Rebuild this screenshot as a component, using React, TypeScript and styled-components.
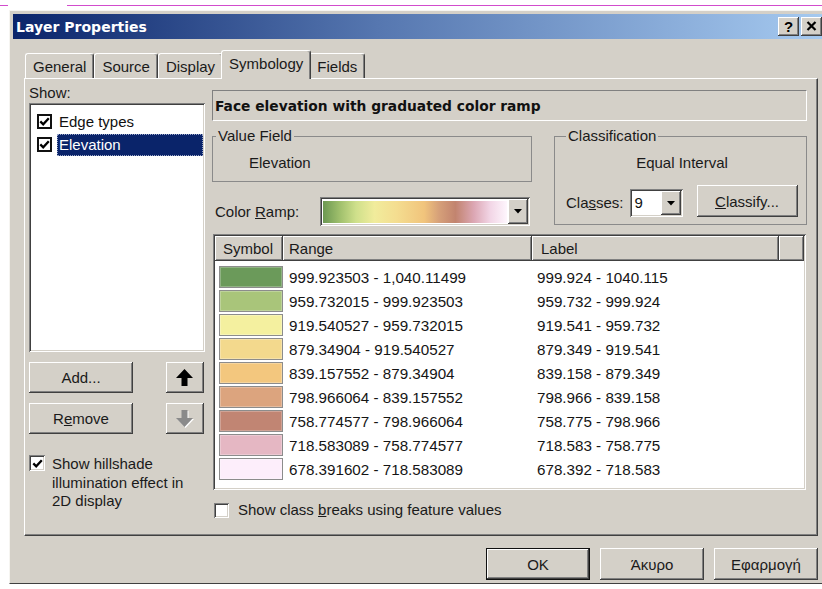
import React from "react";
import styled, { createGlobalStyle, css } from "styled-components";

const FACE = "#d4d0c8";
const SHADOW = "#808080";
const DARK = "#404040";

const GlobalStyle = createGlobalStyle`
  html, body { margin: 0; padding: 0; background: #ffffff; }
  body {
    font-family: "Liberation Sans", Arial, sans-serif;
    font-size: 15px;
    color: #111111;
  }
  * { box-sizing: border-box; }
`;

const raised = css`
  background: ${FACE};
  box-shadow: inset -1px -1px ${DARK}, inset 1px 1px #ffffff,
    inset -2px -2px ${SHADOW}, inset 2px 2px ${FACE};
`;

const sunken = css`
  box-shadow: inset 1px 1px ${SHADOW}, inset -1px -1px #ffffff,
    inset 2px 2px ${DARK}, inset -2px -2px ${FACE};
`;

/* ---------- page & window frame ---------- */

const Page = styled.div`
  width: 822px;
  height: 589px;
  overflow: hidden;
  padding-top: 5px;
  background: #ffffff;
`;

const TopRule = styled.div`
  height: 1px;
  background: linear-gradient(
    to right,
    #d24ccd 0 8px,
    #ffffff 8px 67px,
    #d24ccd 67px
  );
`;

const Window = styled.div`
  margin: 4px 0 0 9px;
  width: 821px;
  height: 574px;
  display: flex;
  flex-direction: column;
  background: ${FACE};
  border: 1px solid;
  border-color: #f6f5f1 ${DARK} ${DARK} #f6f5f1;
  padding: 3px;
`;

const TitleBar = styled.div`
  flex: none;
  height: 25px;
  display: flex;
  align-items: center;
  gap: 2px;
  padding: 0 4px 0 3px;
  background: linear-gradient(to right, #0a246a 0%, #5677b0 45%, #a6caf0 100%);
`;

const Title = styled.div`
  flex: 1;
  color: #ffffff;
  font-family: "DejaVu Sans", "Liberation Sans", sans-serif;
  font-weight: bold;
  font-size: 14px;
`;

const CaptionButton = styled.div`
  ${raised};
  width: 21px;
  height: 19px;
  display: flex;
  align-items: center;
  justify-content: center;
  font-weight: bold;
  font-size: 15px;
  color: #000;
  padding-bottom: 1px;
`;

const Body = styled.div`
  flex: 1;
  display: flex;
  flex-direction: column;
  padding: 11px 8px 0 11px;
`;

/* ---------- tabs ---------- */

const TabStrip = styled.div`
  display: flex;
  align-items: flex-end;
  height: 28px;
  padding-left: 1px;
  position: relative;
  z-index: 1;
`;

const Tab = styled.div<{ $active?: boolean }>`
  height: 25px;
  padding: 0 7px;
  display: flex;
  align-items: center;
  background: ${FACE};
  border-top: 1px solid #ffffff;
  border-left: 1px solid #ffffff;
  border-right: 1px solid ${DARK};
  border-radius: 3px 3px 0 0;
  box-shadow: inset -1px 0 ${SHADOW};
  color: #1a1a1a;
  ${(p) =>
    p.$active &&
    css`
      height: 29px;
      margin: 0 -2px -1px;
      padding: 0 7px 3px;
      position: relative;
      z-index: 2;
    `}
`;

const Panel = styled.div`
  height: 458px;
  display: flex;
  gap: 7px;
  padding: 5px 10px 0 4px;
  border: 1px solid;
  border-color: #ffffff ${DARK} ${DARK} #ffffff;
  box-shadow: inset -1px -1px ${SHADOW};
`;

/* ---------- left column: layer list ---------- */

const LeftColumn = styled.div`
  width: 176px;
  flex: none;
  display: flex;
  flex-direction: column;
`;

const FieldLabel = styled.div`
  height: 19px;
  line-height: 17px;
  color: #1a1a1a;
`;

const ListBox = styled.div`
  ${sunken};
  background: #ffffff;
  height: 249px;
  padding: 7px 2px 0 8px;
`;

const ListItem = styled.div`
  height: 23px;
  display: flex;
  align-items: center;
  gap: 5px;
`;

const ItemText = styled.div<{ $selected?: boolean }>`
  flex: 1;
  height: 22px;
  line-height: 22px;
  padding-left: 2px;
  ${(p) =>
    p.$selected &&
    css`
      background: #0a246a;
      color: #ffffff;
      outline: 1px dotted #9aa6c8;
      outline-offset: -1px;
    `}
`;

const FlatCheck = styled.div`
  width: 15px;
  height: 15px;
  flex: none;
  border: 2px solid #111;
  background: #ffffff;
  display: flex;
  align-items: center;
  justify-content: center;
`;

const Check3D = styled.div<{ $size: number }>`
  ${sunken};
  width: ${(p) => p.$size}px;
  height: ${(p) => p.$size}px;
  flex: none;
  background: #ffffff;
  display: flex;
  align-items: center;
  justify-content: center;
`;

const ButtonRow = styled.div`
  margin-top: 10px;
  display: flex;
  justify-content: space-between;
  padding-right: 1px;
`;

const PushButton = styled.div<{ $w: number; $h: number; $default?: boolean }>`
  ${raised};
  width: ${(p) => p.$w}px;
  height: ${(p) => p.$h}px;
  display: flex;
  align-items: center;
  justify-content: center;
  color: #1a1a1a;
  ${(p) =>
    p.$default &&
    css`
      border: 1px solid #111;
    `}
`;

const CheckOption = styled.div<{ $gap: number }>`
  display: flex;
  align-items: flex-start;
  gap: ${(p) => p.$gap}px;
  line-height: 18.5px;
  color: #1a1a1a;
`;

const Hillshade = styled(CheckOption)`
  margin-top: 21px;
`;

/* ---------- right column: symbology ---------- */

const RightColumn = styled.div`
  flex: 1;
  display: flex;
  flex-direction: column;
  padding-top: 6px;
`;

const Heading = styled.div`
  height: 31px;
  display: flex;
  align-items: center;
  padding-left: 2px;
  font-family: "DejaVu Sans", "Liberation Sans", sans-serif;
  font-weight: bold;
  font-size: 13.8px;
  border: 1px solid;
  border-color: ${SHADOW} #ffffff #ffffff ${SHADOW};
  color: #111;
`;

const Settings = styled.div`
  margin-top: 7px;
  display: grid;
  grid-template-columns: 320px 253px;
  column-gap: 22px;
  align-items: start;
`;

const SettingsLeft = styled.div`
  display: flex;
  flex-direction: column;
`;

const Group = styled.fieldset<{ $pad: string }>`
  margin: 0;
  padding: ${(p) => p.$pad};
  border: 1px solid #8a8a8a;
  min-width: 0;
`;

const Legend = styled.legend`
  padding: 0 2px;
  line-height: 16px;
  color: #1a1a1a;
`;

const GroupValue = styled.div<{ $indent?: number; $center?: boolean }>`
  line-height: 17px;
  margin-left: ${(p) => p.$indent ?? 0}px;
  text-align: ${(p) => (p.$center ? "center" : "left")};
  color: #1a1a1a;
`;

const RampRow = styled.div`
  margin-top: 15px;
  display: grid;
  grid-template-columns: 108px 210px;
  align-items: center;
`;

const RampLabel = styled.div`
  padding-left: 3px;
  color: #1a1a1a;
`;

const Combo = styled.div<{ $w: number; $h: number }>`
  ${sunken};
  background: #ffffff;
  width: ${(p) => p.$w}px;
  height: ${(p) => p.$h}px;
  display: flex;
  align-items: stretch;
  padding: 2px 2px 2px 3px;
`;

const RampSwatch = styled.div`
  flex: 1;
  margin: 2px 1px 1px 0;
  background: linear-gradient(
    to right,
    #6c9852 0%,
    #9fbf6c 9%,
    #cfe08b 18%,
    #f1ec9c 28%,
    #f4dd90 40%,
    #f1c47c 55%,
    #d6a079 63%,
    #c2846f 72%,
    #dca7b4 82%,
    #f2d6e6 91%,
    #fef6fd 100%
  );
`;

const ComboValue = styled.div`
  flex: 1;
  line-height: 24px;
  padding-left: 2px;
`;

const DropButton = styled.div`
  ${raised};
  width: 20px;
  flex: none;
  display: flex;
  align-items: center;
  justify-content: center;
`;

const ClassesRow = styled.div`
  margin-top: 14px;
  display: flex;
  align-items: flex-end;
`;

const ClassesLabel = styled.div`
  margin-right: 6px;
  line-height: 28px;
  color: #1a1a1a;
`;

const ClassifyButton = styled(PushButton)`
  margin-left: 14px;
`;

/* ---------- class table ---------- */

const Table = styled.div`
  ${sunken};
  margin: 8px 1px 0;
  height: 256px;
  background: #ffffff;
  padding: 2px;
  display: flex;
  flex-direction: column;
`;

const columns = "68px 249px 247px 1fr";

const HeaderRow = styled.div`
  display: grid;
  grid-template-columns: ${columns};
  height: 25px;
`;

const HeaderCell = styled.div<{ $pad: number }>`
  ${raised};
  display: flex;
  align-items: center;
  padding-left: ${(p) => p.$pad}px;
  color: #1a1a1a;
`;

const Rows = styled.div`
  padding-top: 4px;
`;

const ClassRow = styled.div`
  display: grid;
  grid-template-columns: ${columns};
  height: 24px;
  align-items: center;
  font-size: 15.2px;
  color: #151515;
`;

const Swatch = styled.div<{ $color: string }>`
  margin-left: 4px;
  width: 64px;
  height: 22px;
  background: ${(p) => p.$color};
  border: 1px solid #8c8c8c;
  box-shadow: inset 0 0 0 1px rgba(255, 255, 255, 0.25);
`;

const CellText = styled.div<{ $pad: number }>`
  padding-left: ${(p) => p.$pad}px;
  white-space: nowrap;
`;

const BreaksOption = styled(CheckOption)`
  margin: 11px 0 0 2px;
  align-items: center;
`;

/* ---------- dialog buttons ---------- */

const DialogButtons = styled.div`
  margin-top: 12px;
  display: flex;
  justify-content: flex-end;
  gap: 10px;
`;

/* ---------- drawings ---------- */

const CheckMark = () => (
  <svg width="11" height="11" viewBox="0 0 11 11">
    <path
      d="M1.3 5.4 L4.2 8.3 L9.8 2.2"
      fill="none"
      stroke="#000"
      strokeWidth="2.3"
    />
  </svg>
);

const DropArrow = () => (
  <svg width="8" height="5" viewBox="0 0 8 5">
    <path d="M0 0 H8 L4 4.5 Z" fill="#000" />
  </svg>
);

const CloseGlyph = () => (
  <svg width="11" height="10" viewBox="0 0 11 10">
    <path d="M1.5 1 L9.5 9 M9.5 1 L1.5 9" stroke="#000" strokeWidth="2.2" />
  </svg>
);

const UP_ARROW = "8.5,0 17,9 11.5,9 11.5,17 5.5,17 5.5,9 0,9";
const DOWN_ARROW = "8.5,17 17,8 11.5,8 11.5,0 5.5,0 5.5,8 0,8";

const MoveArrow = ({ down }: { down?: boolean }) => (
  <svg width="18" height="18" viewBox="0 0 18 18">
    {down ? (
      <>
        <polygon points={DOWN_ARROW} fill="#ffffff" transform="translate(1 1)" />
        <polygon points={DOWN_ARROW} fill="#8a8a8a" />
      </>
    ) : (
      <polygon points={UP_ARROW} fill="#000" />
    )}
  </svg>
);

/* ---------- data ---------- */

const classes: { color: string; range: string; label: string }[] = [
  { color: "#6b9a5a", range: "999.923503 - 1,040.11499", label: "999.924 - 1040.115" },
  { color: "#a9c57a", range: "959.732015 - 999.923503", label: "959.732 - 999.924" },
  { color: "#f4f09f", range: "919.540527 - 959.732015", label: "919.541 - 959.732" },
  { color: "#f3d98d", range: "879.34904 - 919.540527", label: "879.349 - 919.541" },
  { color: "#f3c77e", range: "839.157552 - 879.34904", label: "839.158 - 879.349" },
  { color: "#dca47e", range: "798.966064 - 839.157552", label: "798.966 - 839.158" },
  { color: "#c18573", range: "758.774577 - 798.966064", label: "758.775 - 798.966" },
  { color: "#e5b7c3", range: "718.583089 - 758.774577", label: "718.583 - 758.775" },
  { color: "#fdeefb", range: "678.391602 - 718.583089", label: "678.392 - 718.583" },
];

const tabs = ["General", "Source", "Display", "Symbology", "Fields"];

export default function App() {
  return (
    <Page>
      <GlobalStyle />
      <TopRule />
      <Window>
        <TitleBar>
          <Title>Layer Properties</Title>
          <CaptionButton>?</CaptionButton>
          <CaptionButton>
            <CloseGlyph />
          </CaptionButton>
        </TitleBar>

        <Body>
          <TabStrip>
            {tabs.map((t) => (
              <Tab key={t} $active={t === "Symbology"}>
                {t}
              </Tab>
            ))}
          </TabStrip>

          <Panel>
            <LeftColumn>
              <FieldLabel>Show:</FieldLabel>
              <ListBox>
                <ListItem>
                  <FlatCheck>
                    <CheckMark />
                  </FlatCheck>
                  <ItemText>Edge types</ItemText>
                </ListItem>
                <ListItem>
                  <FlatCheck>
                    <CheckMark />
                  </FlatCheck>
                  <ItemText $selected>Elevation</ItemText>
                </ListItem>
              </ListBox>

              <ButtonRow>
                <PushButton $w={104} $h={31}>
                  Add...
                </PushButton>
                <PushButton $w={38} $h={31}>
                  <MoveArrow />
                </PushButton>
              </ButtonRow>
              <ButtonRow>
                <PushButton $w={104} $h={31}>
                  R<u>e</u>move
                </PushButton>
                <PushButton $w={38} $h={31}>
                  <MoveArrow down />
                </PushButton>
              </ButtonRow>

              <Hillshade $gap={7}>
                <Check3D $size={16}>
                  <CheckMark />
                </Check3D>
                <div>Show hillshade illumination effect in 2D display</div>
              </Hillshade>
            </LeftColumn>

            <RightColumn>
              <Heading>Face elevation with graduated color ramp</Heading>

              <Settings>
                <SettingsLeft>
                  <Group $pad="10px 0 10px 3px">
                    <Legend>Value Field</Legend>
                    <GroupValue $indent={33}>Elevation</GroupValue>
                  </Group>
                  <RampRow>
                    <RampLabel>
                      Color <u>R</u>amp:
                    </RampLabel>
                    <Combo $w={210} $h={29}>
                      <RampSwatch />
                      <DropButton>
                        <DropArrow />
                      </DropButton>
                    </Combo>
                  </RampRow>
                </SettingsLeft>

                <Group $pad="10px 8px 7px 11px">
                  <Legend>Classification</Legend>
                  <GroupValue $center>Equal Interval</GroupValue>
                  <ClassesRow>
                    <ClassesLabel>
                      Cla<u>s</u>ses:
                    </ClassesLabel>
                    <Combo $w={53} $h={28}>
                      <ComboValue>9</ComboValue>
                      <DropButton>
                        <DropArrow />
                      </DropButton>
                    </Combo>
                    <ClassifyButton $w={101} $h={32}>
                      <u>C</u>lassify...
                    </ClassifyButton>
                  </ClassesRow>
                </Group>
              </Settings>

              <Table>
                <HeaderRow>
                  <HeaderCell $pad={8}>Symbol</HeaderCell>
                  <HeaderCell $pad={6}>Range</HeaderCell>
                  <HeaderCell $pad={9}>Label</HeaderCell>
                  <HeaderCell $pad={0} />
                </HeaderRow>
                <Rows>
                  {classes.map((c) => (
                    <ClassRow key={c.range}>
                      <Swatch $color={c.color} />
                      <CellText $pad={6}>{c.range}</CellText>
                      <CellText $pad={5}>{c.label}</CellText>
                      <div />
                    </ClassRow>
                  ))}
                </Rows>
              </Table>

              <BreaksOption $gap={9}>
                <Check3D $size={15} />
                <div>
                  Show class <u>b</u>reaks using feature values
                </div>
              </BreaksOption>
            </RightColumn>
          </Panel>

          <DialogButtons>
            <PushButton $w={104} $h={32} $default>
              OK
            </PushButton>
            <PushButton $w={104} $h={32}>
              Άκυρο
            </PushButton>
            <PushButton $w={104} $h={32}>
              Εφαρμογή
            </PushButton>
          </DialogButtons>
        </Body>
      </Window>
    </Page>
  );
}
